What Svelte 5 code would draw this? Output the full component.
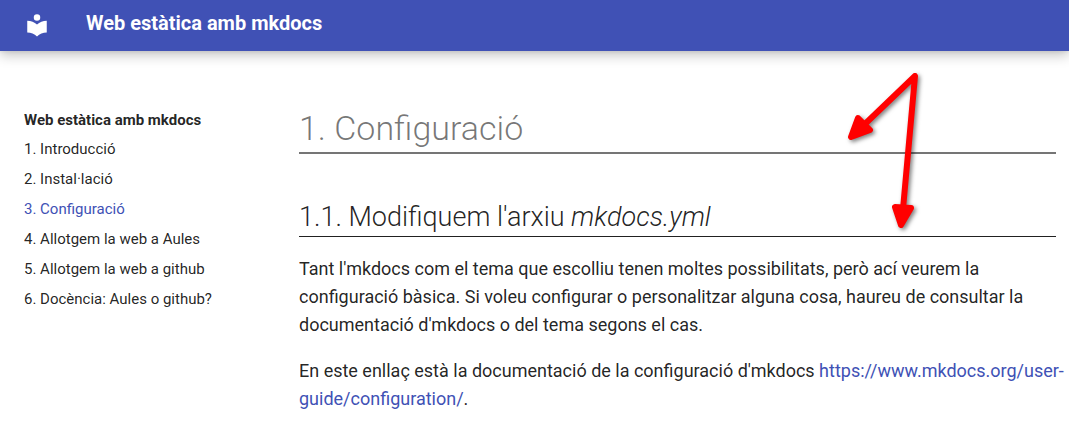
<script>
  const items = ['1. Introducció', '2. Instal·lació', '3. Configuració', '4. Allotgem la web a Aules', '5. Allotgem la web a github', '6. Docència: Aules o github?'];
</script>

<header>
  <a class="logo" href="#top" aria-label="Web estàtica amb mkdocs">
    <svg viewBox="0 0 24 24" width="26" height="26"><path fill="currentColor" d="M12 8a3 3 0 0 0 3-3 3 3 0 0 0-3-3 3 3 0 0 0-3 3 3 3 0 0 0 3 3m0 3.54C9.64 9.35 6.5 8 3 8v11c3.5 0 6.64 1.35 9 3.54 2.36-2.19 5.5-3.54 9-3.54V8c-3.5 0-6.64 1.35-9 3.54z" /></svg>
  </a>
  <span class="title">Web estàtica amb mkdocs</span>
</header>
<div class="page" id="top">
  <nav aria-label="Web estàtica amb mkdocs">
    <strong>Web estàtica amb mkdocs</strong>
    <ul>
      {#each items as item, i}
        <li><a href="#configuracio" class:active={i === 2}>{item}</a></li>
      {/each}
    </ul>
  </nav>
  <main>
    <h1 id="configuracio">1. Configuració</h1>
    <h2>1.1. Modifiquem l'arxiu <em>mkdocs.yml</em></h2>
    <p>Tant l'mkdocs com el tema que escolliu tenen moltes possibilitats, però ací veurem la configuració bàsica. Si voleu configurar o personalitzar alguna cosa, haureu de consultar la documentació d'mkdocs o del tema segons el cas.</p>
    <p>En este enllaç està la documentació de la configuració d'mkdocs <a href="https://www.mkdocs.org/user-guide/configuration/">https://www.mkdocs.org/user-guide/configuration/</a>.</p>
    <svg class="arrows" viewBox="0 0 80 170" width="80" height="170" aria-hidden="true">
      <g fill="#f00" stroke="#f00" stroke-linejoin="round" stroke-linecap="round">
        <path fill="none" stroke-width="6" d="M20 56 69 9 57 142" />
        <path stroke-width="6" d="M5 70 12 51 24 63zM55 158 49 140 65 141z" />
      </g>
    </svg>
  </main>
</div>

<style>
  :global(body) { margin: 0; background: #fff; }
  header, .page { font-family: Roboto, sans-serif; color: rgba(0, 0, 0, 0.87); }
  header {
    display: flex;
    align-items: center;
    padding: 11px 24px 12px;
    background: #4051b5;
    color: #fff;
    box-shadow: 0 0 4px rgba(0, 0, 0, 0.1), 0 4px 12px rgba(0, 0, 0, 0.24);
  }
  .logo { display: flex; color: #fff; }
  .title { margin-left: 36px; padding-bottom: 4px; font-size: 20px; font-weight: 700; line-height: 24px; }
  .page { display: grid; grid-template-columns: 251px minmax(0, 1fr); gap: 24px; padding: 56px 13px 0 24px; }
  nav { font-size: 15px; line-height: 20px; padding-top: 3px; }
  nav strong { display: block; }
  ul { list-style: none; margin: 9px 0 0; padding: 0; display: grid; gap: 10px; }
  nav a { color: inherit; text-decoration: none; }
  nav a.active, p a { color: #4051b5; text-decoration: none; }
  main { position: relative; font-size: 18px; line-height: 28px; }
  h1, h2 { font-weight: 300; margin: 0; }
  h1 { font-size: 34px; line-height: 43px; padding-bottom: 2px; color: rgba(0, 0, 0, 0.54); border-bottom: 2px solid currentColor; }
  h2 { margin-top: 45px; font-size: 27px; line-height: 37px; border-bottom: 1px solid currentColor; }
  p { margin: 18px -8px 18px 0; }
  .arrows { position: absolute; top: -40px; right: 130px; filter: drop-shadow(2px 2px 2px rgba(0, 0, 0, 0.5)); }
</style>
